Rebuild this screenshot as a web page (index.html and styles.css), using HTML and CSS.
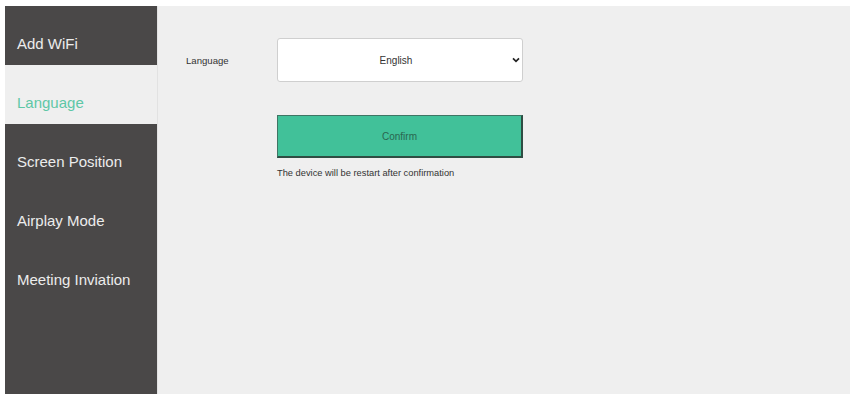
FILE: index.html
```html
<!DOCTYPE html>
<html lang="en">
<head>
<meta charset="utf-8">
<title>Settings</title>
<link rel="stylesheet" href="styles.css">
</head>
<body>
<div class="app">
  <nav class="sidebar">
    <div class="nav-item">Add WiFi</div>
    <div class="nav-item active">Language</div>
    <div class="nav-item">Screen Position</div>
    <div class="nav-item">Airplay Mode</div>
    <div class="nav-item">Meeting Inviation</div>
  </nav>
  <main class="main">
    <div class="row">
      <label class="label" for="lang">Language</label>
      <div class="select-wrap">
        <select id="lang" class="select">
          <option>English</option>
          <option>中文</option>
        </select>
        <svg class="chevron" width="8" height="6" viewBox="0 0 8 6" aria-hidden="true">
          <path d="M1 1.3 L4 4.3 L7 1.3" fill="none" stroke="#222" stroke-width="1.7"/>
        </svg>
      </div>
    </div>
    <div class="actions">
      <button class="confirm" type="button">Confirm</button>
      <p class="note">The device will be restart after confirmation</p>
    </div>
  </main>
</div>
</body>
</html>
```

FILE: styles.css
```css
html, body {
  margin: 0;
  padding: 0;
  background: #ffffff;
}
body {
  padding: 6px 9px 8px 5px;
  font-family: "Liberation Sans", Arial, sans-serif;
}
.app {
  display: flex;
  height: 388px;
  background: #efefef;
}
.sidebar {
  width: 152px;
  background: #4a4848;
  display: flex;
  flex-direction: column;
  box-shadow: 1px 0 0 #e2e2e2;
}
.nav-item {
  height: 59px;
  box-sizing: border-box;
  padding: 29px 0 0 12px;
  font-size: 15px;
  line-height: 18px;
  color: #ececec;
}
.nav-item.active {
  background: #efefef;
  color: #5ec7a6;
}
.main {
  flex: 1;
  padding: 32px 0 0 29px;
}
.row {
  display: flex;
  align-items: center;
}
.label {
  width: 91px;
  font-size: 9.6px;
  color: #333333;
}
.select-wrap {
  position: relative;
  width: 246px;
  height: 44px;
}
.select {
  -webkit-appearance: none;
  appearance: none;
  width: 100%;
  height: 100%;
  box-sizing: border-box;
  border: 1px solid #cfcfcf;
  border-radius: 3px;
  background: #ffffff;
  font-family: "Liberation Sans", Arial, sans-serif;
  font-size: 10px;
  color: #333333;
  text-align: center;
  text-align-last: center;
  padding: 0 12px 0 4px;
}
.chevron {
  position: absolute;
  right: 3px;
  top: 19px;
  pointer-events: none;
}
.actions {
  margin: 33px 0 0 91px;
}
.confirm {
  display: block;
  width: 246px;
  height: 43px;
  box-sizing: border-box;
  background: #41c199;
  border: 1px solid #3f7564;
  border-right: 2px solid #2f4d43;
  border-bottom: 2px solid #2f4d43;
  font-family: "Liberation Sans", Arial, sans-serif;
  font-size: 10px;
  color: #2a6650;
  padding: 0;
}
.note {
  margin: 10px 0 0 0;
  font-size: 9.3px;
  color: #333333;
}
```
